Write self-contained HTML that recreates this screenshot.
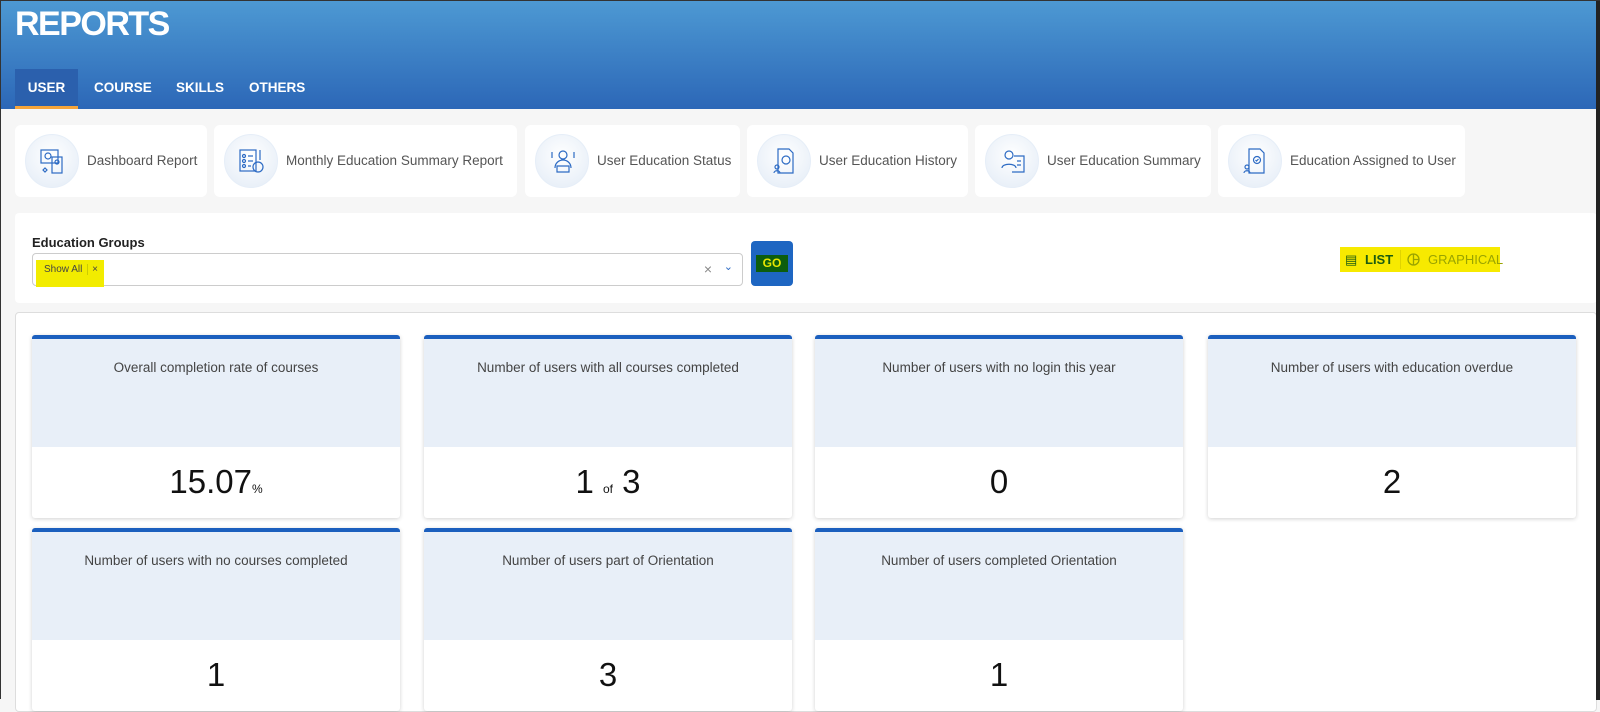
<!DOCTYPE html>
<html><head><style>
*{box-sizing:border-box;margin:0;padding:0}
body{width:1600px;height:699px;overflow:hidden;background:#f6f6f6;font-family:"Liberation Sans",sans-serif;position:relative;border-left:1px solid #333;border-top:1px solid #333}
.hdr{position:absolute;left:0;top:0;width:1596px;height:108px;background:linear-gradient(#4d99d3,#2c67b7)}
.title{position:absolute;left:14px;top:4px;color:#fff;font-weight:bold;font-size:34px;letter-spacing:-1.5px}
.tab{position:absolute;top:68px;height:40px;color:#fff;font-weight:bold;font-size:13.5px;line-height:38px}
.tab.act{left:14px;width:63px;background:#2b60ad;text-align:center;border-bottom:3px solid #f6a53a}
.edge{position:absolute;right:0;top:0;width:4px;height:699px;background:#222}
.tile{position:absolute;top:124px;height:72px;background:#fff;border-radius:6px;font-size:13.5px;color:#555;line-height:72px;padding-left:72px;white-space:nowrap}
.tile .c{position:absolute;left:10px;top:9px;width:54px;height:54px;border-radius:50%;background:radial-gradient(circle at 50% 40%,#fff,#e2ebf6);border:1px solid #e6eef8}
.tile .c svg{position:absolute;left:14px;top:13px}
.panel{position:absolute;left:14px;top:212px;width:1582px;height:90px;background:#fff;border-radius:4px}
.lbl{position:absolute;left:31px;top:234px;font-size:13px;font-weight:bold;color:#222}
.sel{position:absolute;left:31px;top:252px;width:711px;height:33px;border:1px solid #ccc;border-radius:4px;background:#fff}
.chip{position:absolute;left:3px;top:6px;width:68px;height:27px;background:#f2ec00;font-size:10px;color:#444;line-height:20px;padding-left:8px}
.go{position:absolute;left:750px;top:240px;width:42px;height:45px;background:#1e66c2;border-radius:4px}
.go span{position:absolute;left:5px;top:14px;width:32px;height:17px;background:#0c5d0d;color:#e6e600;font-weight:bold;font-size:12px;text-align:center;line-height:17px}
.lg{position:absolute;left:1339px;top:246px;width:160px;height:25px;background:#f7ea00;font-size:13px;line-height:25px}
.cards{position:absolute;left:14px;top:311px;width:1582px;height:400px;background:#fff;border:1px solid #ddd;border-radius:4px}
.card{position:absolute;width:368px;height:183px;background:#fff;border-top:4px solid #1b5fbe;border-radius:3px;box-shadow:0 1px 4px rgba(0,0,0,.18);text-align:center}
.card .h{height:108px;background:#e8eff8;font-size:13.5px;color:#444;padding-top:21px}
.card .v{font-size:33px;color:#111;padding-top:16px}
.card .v small{font-size:12px}
</style></head><body>
<div class="hdr">
<div class="title">REPORTS</div>
<div class="tab act">USER</div>
<div class="tab" style="left:93px">COURSE</div>
<div class="tab" style="left:175px">SKILLS</div>
<div class="tab" style="left:248px">OTHERS</div>
</div>

<div class="tile" style="left:14px;width:192px"><div class="c"><svg width="24" height="26" fill="none" stroke="#2d6bc4" stroke-width="1.2"><rect x="1" y="2" width="17" height="13"/><circle cx="8" cy="8" r="3"/><rect x="12" y="9" width="10" height="16"/><circle cx="17" cy="14" r="2"/><path d="M3 22l2-2 2 2-2 2z"/></svg></div>Dashboard Report</div>
<div class="tile" style="left:213px;width:303px"><div class="c"><svg width="26" height="26" fill="none" stroke="#2d6bc4" stroke-width="1.2"><rect x="1" y="2" width="16" height="21"/><circle cx="5" cy="8" r="1.5"/><circle cx="5" cy="13" r="1.5"/><circle cx="5" cy="18" r="1.5"/><path d="M9 8h5M9 13h5M9 18h3M21 2v10"/><circle cx="19" cy="19" r="5"/></svg></div>Monthly Education Summary Report</div>
<div class="tile" style="left:524px;width:215px"><div class="c"><svg width="26" height="26" fill="none" stroke="#2d6bc4" stroke-width="1.2"><circle cx="13" cy="7" r="4"/><path d="M5 20c0-5 4-8 8-8s8 3 8 8M7 18h12v6H7zM2 4v6M24 4v6"/></svg></div>User Education Status</div>
<div class="tile" style="left:746px;width:221px"><div class="c"><svg width="26" height="26" fill="none" stroke="#2d6bc4" stroke-width="1.2"><path d="M6 1h11l4 4v20H6z"/><circle cx="14" cy="12" r="4"/><circle cx="5" cy="19" r="2"/><path d="M2 25c0-3 6-3 6 0"/></svg></div>User Education History</div>
<div class="tile" style="left:974px;width:236px"><div class="c"><svg width="26" height="26" fill="none" stroke="#2d6bc4" stroke-width="1.2"><circle cx="9" cy="7" r="4"/><path d="M2 20c0-5 14-5 14 0M14 8h10v16H12M17 13h4M17 17h4"/></svg></div>User Education Summary</div>
<div class="tile" style="left:1217px;width:247px"><div class="c"><svg width="26" height="26" fill="none" stroke="#2d6bc4" stroke-width="1.2"><path d="M6 1h11l4 4v20H6z"/><circle cx="14" cy="12" r="3.5"/><path d="M12.5 12l1 1 2-2"/><circle cx="4" cy="19" r="2"/><path d="M1 25c0-3 6-3 6 0"/></svg></div>Education Assigned to User</div>

<div class="panel"></div>
<div class="lbl">Education Groups</div>
<div class="sel"><div class="chip">Show All <span style="border-left:1px solid #cc0;padding-left:4px;margin-left:2px">×</span></div><span style="position:absolute;right:30px;top:7px;color:#888;font-size:14px">×</span><span style="position:absolute;right:9px;top:6px;color:#2d6bc4;font-size:11px">⌄</span></div>
<div class="go"><span>GO</span></div>
<div class="lg"><span style="position:absolute;left:5px;color:#1b5c10">▤</span><b style="position:absolute;left:25px;color:#1b5c10">LIST</b><span style="position:absolute;left:60px;top:3px;height:19px;border-left:1px solid #e0d400"></span><svg style="position:absolute;left:67px;top:6px" width="13" height="13" fill="none" stroke="#9aa400" stroke-width="1.3"><circle cx="6.5" cy="6.5" r="5.5"/><path d="M6.5 1v11M6.5 6.5h5"/></svg><span style="position:absolute;left:88px;color:#9aa400">GRAPHICAL</span></div>

<div class="cards"></div>
<div class="card" style="left:31px;top:334px"><div class="h">Overall completion rate of courses</div><div class="v">15.07<small>%</small></div></div>
<div class="card" style="left:423px;top:334px"><div class="h">Number of users with all courses completed</div><div class="v">1 <small>of</small> 3</div></div>
<div class="card" style="left:814px;top:334px"><div class="h">Number of users with no login this year</div><div class="v">0</div></div>
<div class="card" style="left:1207px;top:334px"><div class="h">Number of users with education overdue</div><div class="v">2</div></div>
<div class="card" style="left:31px;top:527px"><div class="h">Number of users with no courses completed</div><div class="v">1</div></div>
<div class="card" style="left:423px;top:527px"><div class="h">Number of users part of Orientation</div><div class="v">3</div></div>
<div class="card" style="left:814px;top:527px"><div class="h">Number of users completed Orientation</div><div class="v">1</div></div>
<div class="edge"></div>
</body></html>
